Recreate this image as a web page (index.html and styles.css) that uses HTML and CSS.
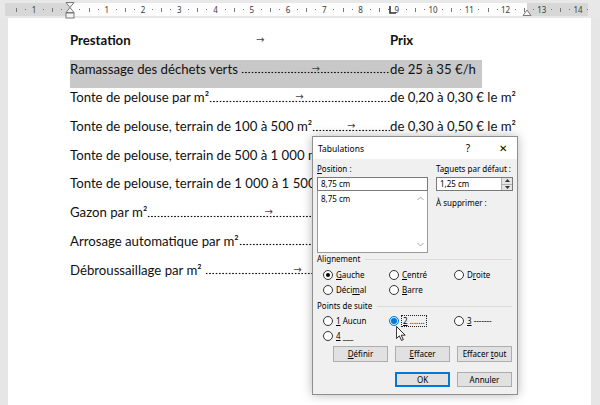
FILE: index.html
```html
<!DOCTYPE html>
<html lang="fr">
<head>
    <meta charset="UTF-8">
    <title>Tabulations</title>
    <link rel="stylesheet" href="styles.css">
</head>
<body>
<div class="window">

    <div class="ruler">
        <div class="ruler-band">
            <div class="band-margin band-left"></div>
            <div class="band-text"></div>
            <div class="band-margin band-right"></div>
        </div>
        <div class="ruler-scale">
            <span>1</span><span></span><span>1</span><span>2</span><span>3</span><span>4</span><span>5</span><span>6</span><span>7</span><span>8</span><span>9</span><span>10</span><span>11</span><span>12</span><span>13</span><span>14</span>
        </div>
        <!-- indent markers and tab stop -->
        <svg class="marker marker-left" width="10" height="18" viewBox="0 0 10 18">
            <path d="M1 1.5 H9 L5 6.5 Z" fill="#f4f4f4" stroke="#7a7a7a"/>
            <path d="M5 6.5 L9 11.5 H1 Z" fill="#f4f4f4" stroke="#7a7a7a"/>
            <rect x="1" y="12" width="8" height="5" fill="#f4f4f4" stroke="#7a7a7a"/>
        </svg>
        <svg class="marker marker-right" width="10" height="8" viewBox="0 0 10 8">
            <path d="M5 1 L9 6.5 H1 Z" fill="#f4f4f4" stroke="#7a7a7a"/>
        </svg>
        <svg class="marker marker-tab" width="7" height="8" viewBox="0 0 7 8">
            <path d="M1 0 V7 H7" fill="none" stroke="#333" stroke-width="1.6"/>
        </svg>
    </div>

    <div class="workspace">
        <div class="gutter"></div>
        <div class="page">
            <div class="doc">
                <div class="row head">
                    <div class="lead"><span class="label">Prestation</span><span class="leader plain"><span class="tab">→</span></span></div>
                    <div class="price">Prix</div>
                </div>
                <div class="row shaded">
                    <div class="lead"><span class="label">Ramassage des déchets verts&nbsp;</span><span class="leader"><span class="tab">→</span></span></div>
                    <div class="price">de 25 à 35 €/h</div>
                </div>
                <div class="row">
                    <div class="lead"><span class="label">Tonte de pelouse par m²</span><span class="leader"><span class="tab">→</span></span></div>
                    <div class="price">de 0,20 à 0,30 € le m²</div>
                </div>
                <div class="row">
                    <div class="lead"><span class="label">Tonte de pelouse, terrain de 100 à 500 m²</span><span class="leader"><span class="tab">→</span></span></div>
                    <div class="price">de 0,30 à 0,50 € le m²</div>
                </div>
                <div class="row">
                    <div class="lead"><span class="label">Tonte de pelouse, terrain de 500 à 1 000 m²</span><span class="leader"></span></div>
                </div>
                <div class="row">
                    <div class="lead"><span class="label">Tonte de pelouse, terrain de 1 000 à 1 500 m²</span><span class="leader"></span></div>
                </div>
                <div class="row">
                    <div class="lead"><span class="label">Gazon par m²</span><span class="leader"><span class="tab">→</span></span></div>
                </div>
                <div class="row">
                    <div class="lead"><span class="label">Arrosage automatique par m²</span><span class="leader"></span></div>
                </div>
                <div class="row">
                    <div class="lead"><span class="label">Débroussaillage par m²&nbsp;</span><span class="leader"><span class="tab">→</span></span></div>
                </div>
            </div>
        </div>
        <div class="gutter gutter-right"></div>
    </div>

    <div class="dialog">
        <div class="dialog-title">
            <span class="title-text">Tabulations</span>
            <span class="title-help">?</span>
            <span class="title-close">✕</span>
        </div>
        <div class="dialog-body">
            <div class="top">
                <div class="col">
                    <div class="field-label"><u>P</u>osition :</div>
                    <div class="input">8,75 cm</div>
                    <div class="listbox">
                        <div class="list-item">8,75 cm</div>
                        <div class="scroll">
                            <svg width="7" height="5" viewBox="0 0 7 5"><path d="M0.5 4 L3.5 1 L6.5 4" fill="none" stroke="#a6a6a6"/></svg>
                            <svg width="7" height="5" viewBox="0 0 7 5"><path d="M0.5 1 L3.5 4 L6.5 1" fill="none" stroke="#a6a6a6"/></svg>
                        </div>
                    </div>
                </div>
                <div class="col">
                    <div class="field-label">Ta<u>q</u>uets par défaut :</div>
                    <div class="input spin-input">
                        <span>1,25 cm</span>
                        <div class="spinner">
                            <div class="spin-btn"><svg width="5" height="3" viewBox="0 0 5 3"><path d="M0 3 L2.5 0 L5 3 Z" fill="#333"/></svg></div>
                            <div class="spin-btn"><svg width="5" height="3" viewBox="0 0 5 3"><path d="M0 0 L2.5 3 L5 0 Z" fill="#333"/></svg></div>
                        </div>
                    </div>
                    <div class="field-label remove">À supprimer :</div>
                </div>
            </div>

            <div class="group-title"><span>Alignement</span></div>
            <div class="radios">
                <div class="radio checked"><i></i><span><u>G</u>auche</span></div>
                <div class="radio"><i></i><span><u>C</u>entré</span></div>
                <div class="radio"><i></i><span>D<u>r</u>oite</span></div>
                <div class="radio"><i></i><span>Déci<u>m</u>al</span></div>
                <div class="radio"><i></i><span><u>B</u>arre</span></div>
            </div>

            <div class="group-title second"><span>Points de suite</span></div>
            <div class="radios">
                <div class="radio"><i></i><span><u>1</u> Aucun</span></div>
                <div class="radio hot"><i></i><span class="focus"><u>2</u> .......</span></div>
                <div class="radio"><i></i><span><u>3</u> -------</span></div>
                <div class="radio"><i></i><span><u>4</u> ___</span></div>
            </div>

            <div class="buttons">
                <div class="btn"><u>D</u>éfinir</div>
                <div class="btn"><u>E</u>ffacer</div>
                <div class="btn">Effacer <u>t</u>out</div>
            </div>
            <div class="buttons last">
                <div class="btn default">OK</div>
                <div class="btn">Annuler</div>
            </div>
        </div>
    </div>

    <svg class="cursor" width="10" height="15" viewBox="0 0 12 18">
        <path d="M0.5 0.5 V15 L4 11.8 L6.6 17.3 L8.8 16.3 L6.3 11 H11 Z" fill="#fff" stroke="#000" stroke-width="1"/>
    </svg>
</div>
</body>
</html>
```

FILE: styles.css
```css
body {
    margin: 0;
    background: #e6e6e6;
}

.window {
    position: relative;
    width: 600px;
    height: 405px;
    overflow: hidden;
    background: #e6e6e6;
}

/* Ruler */
.ruler {
    height: 18px;
    position: relative;
    background: #e8e8e8;
}

.ruler-band {
    position: absolute;
    left: 5px;
    top: 3px;
    width: 583px;
    height: 13px;
    display: flex;
}

.band-margin {
    background: #d7d7d7;
}

.band-left {
    width: 65px;
}

.band-text {
    width: 457px;
    background: #fdfdfd;
}

.band-right {
    flex: 1;
}

.ruler-scale {
    position: absolute;
    left: 16px;
    top: 3px;
    width: 572px;
    height: 13px;
    display: flex;
    font-family: "Noto Sans", sans-serif;
    font-size: 8px;
    line-height: 13px;
    color: #3c3c3c;
    background-image:
        repeating-linear-gradient(to right, #777 0 1px, transparent 1px 36.28px),
        repeating-linear-gradient(to right, transparent 0 9px, #777 9px 10px, transparent 10px 18.14px);
    background-size: 100% 4px, 100% 1px;
    background-position: 0 4.5px, 0 6px;
    background-repeat: no-repeat;
}

.ruler-scale span {
    width: 36.28px;
    flex: none;
    text-align: center;
}

.marker {
    position: absolute;
}

.marker-left {
    left: 65px;
    top: 1px;
}

.marker-right {
    left: 522px;
    top: 9px;
}

.marker-tab {
    left: 389px;
    top: 6px;
}

/* Page */
.workspace {
    display: flex;
    height: 387px;
}

.gutter {
    width: 8px;
    background: #e6e6e6;
}

.gutter-right {
    width: 9px;
}

.page {
    flex: 1;
    background: #fff;
}

.doc {
    padding: 13px 0 0 62px;
    font-family: Lato, "Liberation Sans", sans-serif;
    font-size: 13.2px;
    color: #111;
}

.row {
    display: grid;
    grid-template-columns: 320px auto;
    width: 460px;
    height: 28.7px;
    line-height: 18px;
}

.row.shaded {
    background: linear-gradient(#c8c8c8, #c8c8c8) no-repeat 0 0 / 412px 100%;
}

.row.head {
    font-weight: bold;
}

.lead {
    display: flex;
    min-width: 0;
}

.label {
    white-space: nowrap;
}

/* dot leader drawn like a row of periods */
.leader {
    flex: 1;
    min-width: 0;
    position: relative;
    background-image: radial-gradient(circle, #111 0.8px, transparent 1.2px);
    background-size: 3.3px 3.3px;
    background-position: 0 11.5px;
    background-repeat: repeat-x;
}

.leader.plain {
    background: none;
}

.tab {
    position: absolute;
    left: 50%;
    top: 0;
    transform: translateX(-50%);
    font-family: "DejaVu Sans", sans-serif;
    font-size: 10px;
    font-weight: normal;
    color: #444;
}

.price {
    white-space: nowrap;
}

/* Dialog */
.dialog {
    position: absolute;
    left: 312px;
    top: 136px;
    width: 206px;
    height: 259px;
    box-sizing: border-box;
    border: 1px solid #8e8e8e;
    background: #f0f0f0;
    box-shadow: 0 0 10px rgba(0, 0, 0, 0.28);
    font-family: "Noto Sans", sans-serif;
    font-size: 8px;
    color: #000;
}

.dialog-title {
    height: 22px;
    display: flex;
    align-items: center;
    padding-left: 5px;
    background: #fff;
    font-size: 8.5px;
}

.title-text {
    flex: 1;
}

.title-help {
    width: 14px;
    font-size: 10px;
    text-align: center;
    margin-right: 21px;
}

.title-close {
    width: 14px;
    font-size: 10px;
    text-align: center;
    margin-right: 7px;
}

.dialog-body {
    padding: 0 5px 0 4px;
}

.top {
    display: grid;
    grid-template-columns: 111px 77px;
    gap: 8px;
    padding-top: 3px;
}

.field-label {
    height: 14px;
    line-height: 14px;
    white-space: nowrap;
}

.input {
    margin-top: 1px;
    height: 14px;
    box-sizing: border-box;
    border: 1px solid #7a7a7a;
    background: #fff;
    line-height: 12px;
    padding-left: 3px;
}

.listbox {
    height: 62px;
    box-sizing: border-box;
    border: 1px solid #9a9a9a;
    border-top: none;
    background: #fff;
    display: flex;
}

.list-item {
    flex: 1;
    padding: 2px 0 0 3px;
    line-height: 12px;
}

.scroll {
    width: 13px;
    display: flex;
    flex-direction: column;
    justify-content: space-between;
    align-items: center;
    padding: 5px 0 5px;
}

.spin-input {
    display: flex;
    padding-right: 0;
}

.spin-input span {
    flex: 1;
}

.spinner {
    width: 11px;
    display: flex;
    flex-direction: column;
}

.spin-btn {
    flex: 1;
    background: #e4e4e4;
    border-left: 1px solid #b0b0b0;
    display: flex;
    align-items: center;
    justify-content: center;
}

.spin-btn + .spin-btn {
    border-top: 1px solid #b0b0b0;
}

.remove {
    margin-top: 5px;
}

.group-title {
    display: flex;
    align-items: center;
    height: 10px;
    line-height: 10px;
    margin-top: 1px;
}

.group-title::after {
    content: '';
    flex: 1;
    height: 1px;
    margin-left: 5px;
    background: #dcdcdc;
}

.group-title.second {
    margin-top: 4px;
}

.radios {
    display: grid;
    grid-template-columns: 66px 65px 1fr;
    padding-left: 6px;
    margin-top: 3px;
}

.group-title.second + .radios {
    margin-top: 2px;
}

.radio {
    height: 15px;
    display: flex;
    align-items: center;
    gap: 3px;
    white-space: nowrap;
}

.radio i {
    width: 10px;
    height: 10px;
    box-sizing: border-box;
    border: 1px solid #333;
    border-radius: 50%;
    background: #fff;
    display: flex;
    align-items: center;
    justify-content: center;
    flex: none;
}

.radio.checked i::after {
    content: '';
    width: 4px;
    height: 4px;
    border-radius: 50%;
    background: #000;
}

.radio.hot i {
    border-color: #0078d7;
    background: #cde6f7;
}

.radio.hot i::after {
    content: '';
    width: 6px;
    height: 6px;
    border-radius: 50%;
    background: #0078d7;
}

.focus {
    outline: 1px dotted #222;
    padding: 0 1px;
    line-height: 10px;
}

.buttons {
    display: flex;
    justify-content: flex-end;
    gap: 7px;
    margin-top: 3px;
}

.buttons.last {
    margin-top: 10px;
}

.btn {
    width: 55px;
    height: 16px;
    box-sizing: border-box;
    border: 1px solid #adadad;
    background: #e1e1e1;
    text-align: center;
    line-height: 14px;
}

.buttons.last .btn {
    height: 15px;
    line-height: 13px;
}

.btn.default {
    border: 1px solid #0078d7;
    box-shadow: inset 0 0 0 1px #0078d7;
}

.cursor {
    position: absolute;
    left: 396px;
    top: 326px;
}
```
